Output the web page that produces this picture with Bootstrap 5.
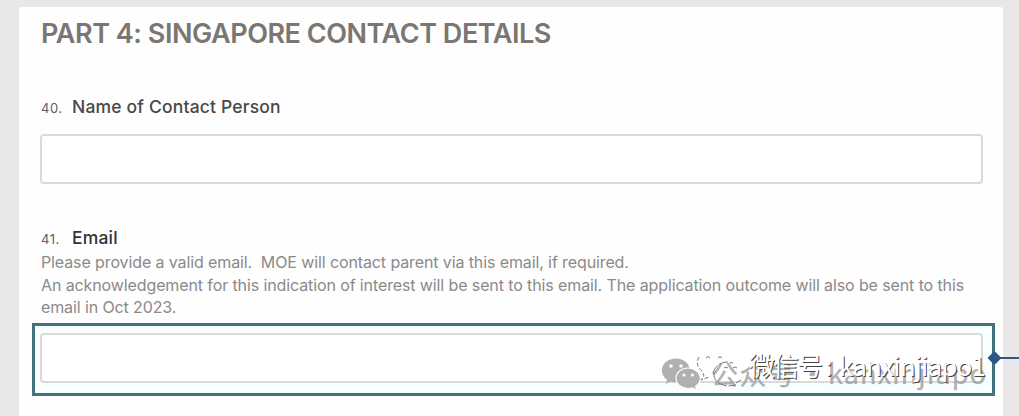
<!DOCTYPE html>
<html lang="en">

<head>
    <meta charset="UTF-8">
    <meta name="viewport" content="width=device-width, initial-scale=1.0">
    <title>Singapore Contact Details</title>
    <link rel="stylesheet" href="https://cdn.jsdelivr.net/npm/bootstrap@5.3.3/dist/css/bootstrap.min.css">
    <script src="https://cdn.jsdelivr.net/npm/bootstrap@5.3.3/dist/js/bootstrap.bundle.min.js"></script>
    <style>
        body {
            background: #e9e8e8;
            font-family: Inter, "Noto Sans CJK SC", sans-serif;
            height: 416px;
            padding: 7px 16px 0 19px;
        }

        .sheet {
            background: #fefefe;
            height: 409px;
            padding: 9px 20px 0 21px;
            border-radius: 3px 3px 0 0;
        }

        .part-title {
            color: #7a7671;
            font-size: 27px;
            font-weight: 600;
            line-height: 36px;
            letter-spacing: -0.46px;
            margin-bottom: 43px;
            padding-left: 1px;
        }

        .question {
            color: #484848;
            font-size: 17.5px;
            font-weight: 500;
            line-height: 24px;
            letter-spacing: 0.18px;
            padding-left: 1px;
        }

        .question .num {
            color: #5c5c5c;
            font-size: 13px;
            font-weight: 400;
            letter-spacing: 0.5px;
            width: 31px;
        }

        .question-email {
            color: #333;
            margin-top: 42px;
        }

        .hint {
            color: #8a8a8a;
            font-size: 16px;
            line-height: 22.6px;
            letter-spacing: -0.11px;
            padding-left: 1px;
            white-space: pre;
        }

        .sheet .form-control {
            height: 50px;
            background: #fff;
            border: 2px solid #dadada;
            border-radius: 4px;
        }

        .name-input {
            margin-top: 14px;
        }

        .highlight {
            margin: 4px -12px 0 -8px;
            padding: 7px 9px 10px 5px;
            height: 73px;
            border: 3px solid #43727f;
            background: #f8ffff;
        }

        .overlay {
            left: 0;
            top: 0;
        }
    </style>
</head>

<body>
    <form class="sheet">
        <h1 class="part-title">PART 4: SINGAPORE CONTACT DETAILS</h1>

        <label for="contactName" class="question d-flex align-items-baseline"><span class="num">40.</span><span>Name of Contact Person</span></label>
        <input class="form-control name-input" type="text" id="contactName" name="contactName">

        <label for="email" class="question question-email d-flex align-items-baseline"><span class="num">41.</span><span>Email</span></label>
        <div class="hint">Please provide a valid email.  MOE will contact parent via this email, if required.<br>An acknowledgement for this indication of interest will be sent to this email. The application outcome will also be sent to this<br>email in Oct 2023.</div>
        <div class="highlight">
            <input class="form-control" type="email" id="email" name="email">
        </div>
    </form>

    <!-- connector and watermarks -->
    <svg class="overlay position-absolute pe-none" width="1019" height="416" viewBox="0 0 1019 416">
        <path d="M995 358H1019" stroke="#34557f" stroke-width="2" />
        <path d="M987.500 358L994.500 351L1001.500 358L994.500 365Z" fill="#2c568a" />

        <g fill="#b0b0b0">
            <path d="M676 358.500c-8 0-14.200 5.300-14.200 12 0 3.900 2 7.200 5.300 9.400l-1.400 4.100 4.900-2.500c1.800.5 3.500.8 5.400.8 7.800 0 14-5.300 14-11.800s-6.200-12-14-12Z" />
            <path stroke="#fefefe" stroke-width="1.200" d="M688 368c-6.700 0-12 4.600-12 10.300s5.300 10.200 12 10.200c1.500 0 3-.2 4.300-.7l4.700 2.300-1.300-3.900c2.900-1.900 4.700-4.600 4.700-7.900 0-5.700-5.700-10.300-12.400-10.300Z" />
        </g>
        <g fill="#fff">
            <circle cx="671" cy="366" r="1.800" />
            <circle cx="681" cy="366" r="1.800" />
            <circle cx="684" cy="375" r="1.600" />
            <circle cx="692.500" cy="375" r="1.600" />
        </g>
        <g fill="#999" fill-opacity=".75" stroke="#999" stroke-opacity=".4" stroke-width=".6" font-family="Noto Sans CJK SC, sans-serif">
            <text x="711" y="385" font-size="27" textLength="84">公众号</text>
            <text x="799" y="385" font-size="27">·</text>
            <text x="828" y="384" font-size="27" textLength="158">kanxinjiapo</text>
        </g>

        <g fill="none" stroke="#777" stroke-width="1">
            <path stroke-dasharray="4 2" d="M699 357c-3 5-2 10 3 14l2 5-3 4 8-3" />
            <path stroke-dasharray="9 2" d="M713 373c2-6 6-10 13-11l7 1M714 373c-1 7 5 12 14 13l8-1" />
            <path d="M706 358q2-3 4 0M718 358q2-3 4 0M724 368q2-2 4 0M733 368q2-2 4 0M736 383l5-3" />
        </g>
        <g font-family="Noto Sans CJK SC, sans-serif" font-size="26">
            <g fill="#444">
                <text x="750" y="377" textLength="74">微信号</text>
                <text x="826" y="377">:</text>
                <text x="840" y="377" textLength="147">kanxinjiapo1</text>
            </g>
            <g fill="#fff">
                <text x="749" y="376" textLength="74">微信号</text>
                <text x="825" y="376">:</text>
                <text x="839" y="376" textLength="147">kanxinjiapo1</text>
            </g>
        </g>
    </svg>
</body>

</html>
